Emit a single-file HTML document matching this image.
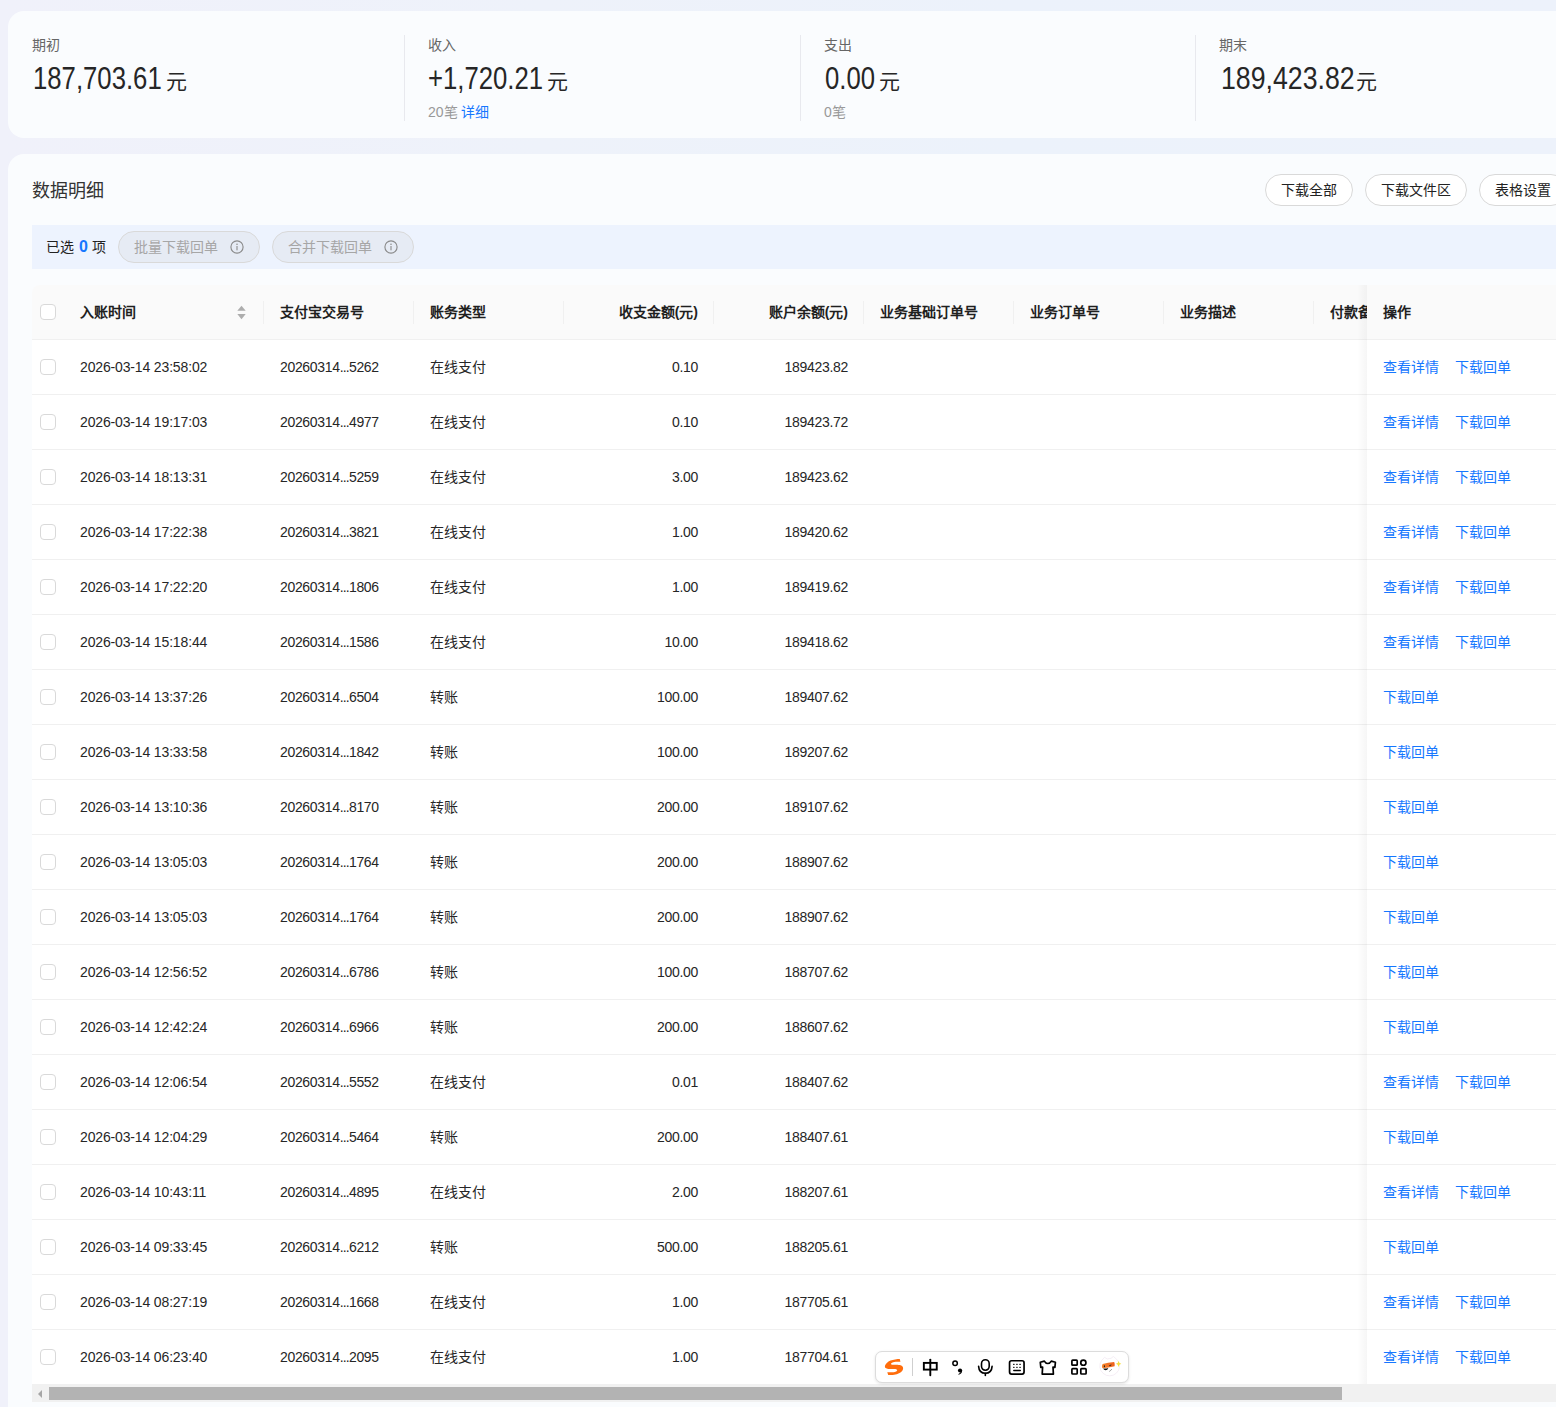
<!DOCTYPE html>
<html lang="zh-CN">
<head>
<meta charset="utf-8">
<title>数据明细</title>
<style>
* { box-sizing: border-box; margin: 0; padding: 0; }
html, body { width: 1556px; height: 1407px; overflow: hidden; background: #eef2fa; }
body { font-family: "Liberation Sans", sans-serif; font-size: 14px; color: #262626; }
.page { position: relative; width: 1556px; height: 1407px; overflow: hidden; background: linear-gradient(90deg, #f0f1fa 0%, #eef2fa 35%, #ecf2fb 65%, #edf2fb 100%); }
a { text-decoration: none; }

.card { position: absolute; left: 8px; width: 1640px; background: #fafcfe; border-radius: 16px; }
.stats { top: 11px; height: 127px; }
.detail { top: 154px; height: 1400px; }

/* stats */
.stat { position: absolute; top: 24px; height: 86px; width: 396px; border-left: 1px solid #e8e9ee; }
.s1 { left: 0; border-left: none; }
.s2 { left: 396px; }
.s3 { left: 792px; }
.s4 { left: 1187px; }
.lab { position: absolute; left: 23px; top: 1px; font-size: 14px; line-height: 18px; color: #666; white-space: nowrap; }
.s1 .lab, .s1 .sub { left: 24px; }
.s1 .val { left: 25px; }
.s3 .val { left: 24px; }
.s4 .val { left: 25px; }
.s4 .num { transform: scaleX(.875); }
.val { position: absolute; left: 23px; top: 23px; height: 40px; line-height: 40px; white-space: nowrap; color: #262626; }
.num { display: inline-block; font-size: 30.5px; transform: scaleX(.843); transform-origin: 0 50%; }
.yuan { position: absolute; top: 4px; font-size: 21px; }
.sub { position: absolute; left: 23px; top: 68px; font-size: 14px; line-height: 18px; color: #999; white-space: nowrap; }
.dt { color: #1677ff; }
.cnt { display: inline-block; min-width: 29px; }
.s3 .cnt { min-width: 0; }
.sel1 { display: inline-block; width: 28px; }

/* detail header */
.title { position: absolute; left: 24px; top: 25px; font-size: 18px; line-height: 24px; color: #333; white-space: nowrap; }
.btns { position: absolute; left: 0; top: 20px; height: 32px; }
.btn { position: absolute; top: 0; height: 32px; line-height: 30px; border: 1px solid #d9d9d9; border-radius: 16px; background: #fff; text-align: center; font-size: 14px; color: #222; white-space: nowrap; overflow: hidden; }
.b1 { left: 1257px; width: 88px; }
.b2 { left: 1357px; width: 102px; }
.b3 { left: 1471px; width: 88px; }

/* selection bar */
.selbar { position: absolute; left: 24px; top: 71px; width: 1600px; height: 44px; background: #edf3fe; }
.seltxt { position: absolute; left: 14px; top: 0; line-height: 44px; font-size: 14px; color: #222; white-space: nowrap; }
.seltxt b { color: #1677ff; font-weight: bold; font-size: 16px; margin: 0 0 0 1px; }
.pill { position: absolute; top: 6px; height: 32px; width: 142px; border: 1px solid #d9d9d9; border-radius: 16px; background: #e6ebf4; color: #a6a6a6; font-size: 14px; line-height: 30px; white-space: nowrap; overflow: hidden; }
.p1 { left: 86px; }
.p2 { left: 240px; }
.pt { position: absolute; left: 15px; top: 0; }
.info { position: absolute; left: 111px; top: 8px; }

/* table */
.table { position: absolute; left: 24px; top: 131px; width: 1600px; }
.thead { position: relative; height: 55px; background: #fafafa; border-bottom: 1px solid #f0f0f0; border-top-left-radius: 8px; }
.tr { position: relative; height: 55px; background: #fff; border-bottom: 1px solid #f0f0f0; }
.th, .td { position: absolute; top: 0; height: 54px; line-height: 54px; white-space: nowrap; overflow: hidden; padding: 0 16px; }
.th { font-weight: bold; color: #1f1f1f; font-size: 14px; }
.td { color: #262626; font-size: 14px; }
.th::after { content: ""; position: absolute; right: 0; top: 16px; width: 1px; height: 23px; background: #f0f0f0; }
.th.c0::after, .th.op::after, .th.c9::after { display: none; }
.c0 { left: 0; width: 32px; padding: 0; }
.c1 { left: 32px; width: 200px; }
.c2 { left: 232px; width: 150px; }
.c3 { left: 382px; width: 150px; }
.c4 { left: 532px; width: 150px; }
.c5 { left: 682px; width: 150px; }
.c6 { left: 832px; width: 150px; }
.c7 { left: 982px; width: 150px; }
.c8 { left: 1132px; width: 150px; }
.c9 { left: 1282px; width: 150px; }
.op { left: 1335px; width: 270px; background: inherit; }
.thead .op { background: #fafafa; }
.tr .op { background: #fff; }
.r { text-align: right; }
.n { letter-spacing: -0.15px; }
.cb { position: absolute; left: 8px; top: 19px; width: 16px; height: 16px; border: 1px solid #d9d9d9; border-radius: 4px; background: #fff; }
.sort { position: absolute; left: 173px; top: 20px; }
.lk { display: inline-block; width: 56px; color: #1677ff; margin-right: 16px; white-space: nowrap; vertical-align: top; }
.fixshadow { position: absolute; left: 1325px; top: 0; width: 10px; height: 1101px; background: linear-gradient(to right, rgba(0,0,0,0), rgba(0,0,0,0.035)); pointer-events: none; }

/* horizontal scrollbar */
.hscroll { position: absolute; left: 24px; top: 1230px; width: 1600px; height: 18px; background: #f1f1f1; }
.arrow { position: absolute; left: 5.8px; top: 5.8px; width: 0; height: 0; border-top: 4px solid transparent; border-bottom: 4px solid transparent; border-right: 4.5px solid #a6a6a6; }
.thumb { position: absolute; left: 17px; top: 3px; width: 1293px; height: 13px; background: #b3b3b3; }

/* IME */
.ime { position: absolute; left: 875px; top: 1351px; width: 254px; height: 32px; background: #fff; border: 1px solid #dcdcdc; border-radius: 7px; box-shadow: 0 1px 3px rgba(0,0,0,0.11); }
.imesvg { position: absolute; left: 875px; top: 1351px; }

.s1 .yuan { left: 133px; }
.s2 .yuan { left: 119px; }
.s3 .yuan { left: 54px; }
.s4 .yuan { left: 135px; }
.c2 .n { letter-spacing: -0.33px; }
.c2 .e { letter-spacing: -0.8px; }
.c4 .n, .c5 .n { letter-spacing: -0.3px; }

</style>
</head>
<body>
<div class="page">

<div class="card stats">
  <div class="stat s1"><div class="lab">期初</div><div class="val"><span class="num">187,703.61</span><span class="yuan">元</span></div></div>
  <div class="stat s2"><div class="lab">收入</div><div class="val"><span class="num">+1,720.21</span><span class="yuan">元</span></div><div class="sub"><span class="cnt">20笔</span> <a class="dt">详细</a></div></div>
  <div class="stat s3"><div class="lab">支出</div><div class="val"><span class="num">0.00</span><span class="yuan">元</span></div><div class="sub"><span class="cnt">0笔</span></div></div>
  <div class="stat s4"><div class="lab">期末</div><div class="val"><span class="num">189,423.82</span><span class="yuan">元</span></div></div>
</div>

<div class="card detail">
  <div class="title">数据明细</div>
  <div class="btns"><span class="btn b1">下载全部</span><span class="btn b2">下载文件区</span><span class="btn b3">表格设置</span></div>

  <div class="selbar">
    <span class="seltxt"><span class="sel1">已选</span> <b>0</b> 项</span>
    <span class="pill p1"><span class="pt">批量下载回单</span><svg class="info" viewBox="0 0 14 14" width="14" height="14"><circle cx="7" cy="7" r="6.1" fill="none" stroke="#8a8a8a" stroke-width="1.15"/><circle cx="7" cy="4.3" r="0.8" fill="#8c8c8c"/><rect x="6.45" y="6" width="1.1" height="4.3" fill="#8c8c8c"/></svg></span>
    <span class="pill p2"><span class="pt">合并下载回单</span><svg class="info" viewBox="0 0 14 14" width="14" height="14"><circle cx="7" cy="7" r="6.1" fill="none" stroke="#8a8a8a" stroke-width="1.15"/><circle cx="7" cy="4.3" r="0.8" fill="#8c8c8c"/><rect x="6.45" y="6" width="1.1" height="4.3" fill="#8c8c8c"/></svg></span>
  </div>

  <div class="table">
    <div class="thead">
      <div class="th c0"><span class="cb"></span></div>
      <div class="th c1">入账时间<svg class="sort" viewBox="0 0 9 15" width="9" height="15"><path d="M4.5 0.7 L8.7 5.8 H0.3 Z" fill="#adadad"/><path d="M4.5 14.2 L8.7 9 H0.3 Z" fill="#adadad"/></svg></div>
      <div class="th c2">支付宝交易号</div>
      <div class="th c3">账务类型</div>
      <div class="th c4 r">收支金额(元)</div>
      <div class="th c5 r">账户余额(元)</div>
      <div class="th c6">业务基础订单号</div>
      <div class="th c7">业务订单号</div>
      <div class="th c8">业务描述</div>
      <div class="th c9">付款备注</div>
      <div class="th op">操作</div>
    </div>
    <div class="tbody">
<div class="tr"><div class="td c0"><span class="cb"></span></div><div class="td c1"><span class="n">2026-03-14 23:58:02</span></div><div class="td c2"><span class="n">20260314<span class="e">...</span>5262</span></div><div class="td c3">在线支付</div><div class="td c4 r"><span class="n">0.10</span></div><div class="td c5 r"><span class="n">189423.82</span></div><div class="td c6"></div><div class="td c7"></div><div class="td c8"></div><div class="td c9"></div><div class="td op"><a class="lk">查看详情</a><a class="lk">下载回单</a></div></div>
<div class="tr"><div class="td c0"><span class="cb"></span></div><div class="td c1"><span class="n">2026-03-14 19:17:03</span></div><div class="td c2"><span class="n">20260314<span class="e">...</span>4977</span></div><div class="td c3">在线支付</div><div class="td c4 r"><span class="n">0.10</span></div><div class="td c5 r"><span class="n">189423.72</span></div><div class="td c6"></div><div class="td c7"></div><div class="td c8"></div><div class="td c9"></div><div class="td op"><a class="lk">查看详情</a><a class="lk">下载回单</a></div></div>
<div class="tr"><div class="td c0"><span class="cb"></span></div><div class="td c1"><span class="n">2026-03-14 18:13:31</span></div><div class="td c2"><span class="n">20260314<span class="e">...</span>5259</span></div><div class="td c3">在线支付</div><div class="td c4 r"><span class="n">3.00</span></div><div class="td c5 r"><span class="n">189423.62</span></div><div class="td c6"></div><div class="td c7"></div><div class="td c8"></div><div class="td c9"></div><div class="td op"><a class="lk">查看详情</a><a class="lk">下载回单</a></div></div>
<div class="tr"><div class="td c0"><span class="cb"></span></div><div class="td c1"><span class="n">2026-03-14 17:22:38</span></div><div class="td c2"><span class="n">20260314<span class="e">...</span>3821</span></div><div class="td c3">在线支付</div><div class="td c4 r"><span class="n">1.00</span></div><div class="td c5 r"><span class="n">189420.62</span></div><div class="td c6"></div><div class="td c7"></div><div class="td c8"></div><div class="td c9"></div><div class="td op"><a class="lk">查看详情</a><a class="lk">下载回单</a></div></div>
<div class="tr"><div class="td c0"><span class="cb"></span></div><div class="td c1"><span class="n">2026-03-14 17:22:20</span></div><div class="td c2"><span class="n">20260314<span class="e">...</span>1806</span></div><div class="td c3">在线支付</div><div class="td c4 r"><span class="n">1.00</span></div><div class="td c5 r"><span class="n">189419.62</span></div><div class="td c6"></div><div class="td c7"></div><div class="td c8"></div><div class="td c9"></div><div class="td op"><a class="lk">查看详情</a><a class="lk">下载回单</a></div></div>
<div class="tr"><div class="td c0"><span class="cb"></span></div><div class="td c1"><span class="n">2026-03-14 15:18:44</span></div><div class="td c2"><span class="n">20260314<span class="e">...</span>1586</span></div><div class="td c3">在线支付</div><div class="td c4 r"><span class="n">10.00</span></div><div class="td c5 r"><span class="n">189418.62</span></div><div class="td c6"></div><div class="td c7"></div><div class="td c8"></div><div class="td c9"></div><div class="td op"><a class="lk">查看详情</a><a class="lk">下载回单</a></div></div>
<div class="tr"><div class="td c0"><span class="cb"></span></div><div class="td c1"><span class="n">2026-03-14 13:37:26</span></div><div class="td c2"><span class="n">20260314<span class="e">...</span>6504</span></div><div class="td c3">转账</div><div class="td c4 r"><span class="n">100.00</span></div><div class="td c5 r"><span class="n">189407.62</span></div><div class="td c6"></div><div class="td c7"></div><div class="td c8"></div><div class="td c9"></div><div class="td op"><a class="lk">下载回单</a></div></div>
<div class="tr"><div class="td c0"><span class="cb"></span></div><div class="td c1"><span class="n">2026-03-14 13:33:58</span></div><div class="td c2"><span class="n">20260314<span class="e">...</span>1842</span></div><div class="td c3">转账</div><div class="td c4 r"><span class="n">100.00</span></div><div class="td c5 r"><span class="n">189207.62</span></div><div class="td c6"></div><div class="td c7"></div><div class="td c8"></div><div class="td c9"></div><div class="td op"><a class="lk">下载回单</a></div></div>
<div class="tr"><div class="td c0"><span class="cb"></span></div><div class="td c1"><span class="n">2026-03-14 13:10:36</span></div><div class="td c2"><span class="n">20260314<span class="e">...</span>8170</span></div><div class="td c3">转账</div><div class="td c4 r"><span class="n">200.00</span></div><div class="td c5 r"><span class="n">189107.62</span></div><div class="td c6"></div><div class="td c7"></div><div class="td c8"></div><div class="td c9"></div><div class="td op"><a class="lk">下载回单</a></div></div>
<div class="tr"><div class="td c0"><span class="cb"></span></div><div class="td c1"><span class="n">2026-03-14 13:05:03</span></div><div class="td c2"><span class="n">20260314<span class="e">...</span>1764</span></div><div class="td c3">转账</div><div class="td c4 r"><span class="n">200.00</span></div><div class="td c5 r"><span class="n">188907.62</span></div><div class="td c6"></div><div class="td c7"></div><div class="td c8"></div><div class="td c9"></div><div class="td op"><a class="lk">下载回单</a></div></div>
<div class="tr"><div class="td c0"><span class="cb"></span></div><div class="td c1"><span class="n">2026-03-14 13:05:03</span></div><div class="td c2"><span class="n">20260314<span class="e">...</span>1764</span></div><div class="td c3">转账</div><div class="td c4 r"><span class="n">200.00</span></div><div class="td c5 r"><span class="n">188907.62</span></div><div class="td c6"></div><div class="td c7"></div><div class="td c8"></div><div class="td c9"></div><div class="td op"><a class="lk">下载回单</a></div></div>
<div class="tr"><div class="td c0"><span class="cb"></span></div><div class="td c1"><span class="n">2026-03-14 12:56:52</span></div><div class="td c2"><span class="n">20260314<span class="e">...</span>6786</span></div><div class="td c3">转账</div><div class="td c4 r"><span class="n">100.00</span></div><div class="td c5 r"><span class="n">188707.62</span></div><div class="td c6"></div><div class="td c7"></div><div class="td c8"></div><div class="td c9"></div><div class="td op"><a class="lk">下载回单</a></div></div>
<div class="tr"><div class="td c0"><span class="cb"></span></div><div class="td c1"><span class="n">2026-03-14 12:42:24</span></div><div class="td c2"><span class="n">20260314<span class="e">...</span>6966</span></div><div class="td c3">转账</div><div class="td c4 r"><span class="n">200.00</span></div><div class="td c5 r"><span class="n">188607.62</span></div><div class="td c6"></div><div class="td c7"></div><div class="td c8"></div><div class="td c9"></div><div class="td op"><a class="lk">下载回单</a></div></div>
<div class="tr"><div class="td c0"><span class="cb"></span></div><div class="td c1"><span class="n">2026-03-14 12:06:54</span></div><div class="td c2"><span class="n">20260314<span class="e">...</span>5552</span></div><div class="td c3">在线支付</div><div class="td c4 r"><span class="n">0.01</span></div><div class="td c5 r"><span class="n">188407.62</span></div><div class="td c6"></div><div class="td c7"></div><div class="td c8"></div><div class="td c9"></div><div class="td op"><a class="lk">查看详情</a><a class="lk">下载回单</a></div></div>
<div class="tr"><div class="td c0"><span class="cb"></span></div><div class="td c1"><span class="n">2026-03-14 12:04:29</span></div><div class="td c2"><span class="n">20260314<span class="e">...</span>5464</span></div><div class="td c3">转账</div><div class="td c4 r"><span class="n">200.00</span></div><div class="td c5 r"><span class="n">188407.61</span></div><div class="td c6"></div><div class="td c7"></div><div class="td c8"></div><div class="td c9"></div><div class="td op"><a class="lk">下载回单</a></div></div>
<div class="tr"><div class="td c0"><span class="cb"></span></div><div class="td c1"><span class="n">2026-03-14 10:43:11</span></div><div class="td c2"><span class="n">20260314<span class="e">...</span>4895</span></div><div class="td c3">在线支付</div><div class="td c4 r"><span class="n">2.00</span></div><div class="td c5 r"><span class="n">188207.61</span></div><div class="td c6"></div><div class="td c7"></div><div class="td c8"></div><div class="td c9"></div><div class="td op"><a class="lk">查看详情</a><a class="lk">下载回单</a></div></div>
<div class="tr"><div class="td c0"><span class="cb"></span></div><div class="td c1"><span class="n">2026-03-14 09:33:45</span></div><div class="td c2"><span class="n">20260314<span class="e">...</span>6212</span></div><div class="td c3">转账</div><div class="td c4 r"><span class="n">500.00</span></div><div class="td c5 r"><span class="n">188205.61</span></div><div class="td c6"></div><div class="td c7"></div><div class="td c8"></div><div class="td c9"></div><div class="td op"><a class="lk">下载回单</a></div></div>
<div class="tr"><div class="td c0"><span class="cb"></span></div><div class="td c1"><span class="n">2026-03-14 08:27:19</span></div><div class="td c2"><span class="n">20260314<span class="e">...</span>1668</span></div><div class="td c3">在线支付</div><div class="td c4 r"><span class="n">1.00</span></div><div class="td c5 r"><span class="n">187705.61</span></div><div class="td c6"></div><div class="td c7"></div><div class="td c8"></div><div class="td c9"></div><div class="td op"><a class="lk">查看详情</a><a class="lk">下载回单</a></div></div>
<div class="tr"><div class="td c0"><span class="cb"></span></div><div class="td c1"><span class="n">2026-03-14 06:23:40</span></div><div class="td c2"><span class="n">20260314<span class="e">...</span>2095</span></div><div class="td c3">在线支付</div><div class="td c4 r"><span class="n">1.00</span></div><div class="td c5 r"><span class="n">187704.61</span></div><div class="td c6"></div><div class="td c7"></div><div class="td c8"></div><div class="td c9"></div><div class="td op"><a class="lk">查看详情</a><a class="lk">下载回单</a></div></div>
    </div>
    <div class="fixshadow"></div>
  </div>

  <div class="hscroll"><span class="arrow"></span><span class="thumb"></span></div>
</div>

<div class="ime"></div>
<svg class="imesvg" width="254" height="32" viewBox="875 1351 254 32">
  <defs>
    <linearGradient id="vis" x1="0" y1="0" x2="1" y2="0"><stop offset="0" stop-color="#f5842a"/><stop offset="1" stop-color="#ef5f1c"/></linearGradient>
  </defs>
  <!-- sogou S -->
  <path d="M899.76 1359.05 C898.99 1359.11 896.68 1359.17 895.14 1359.42 C893.59 1359.67 891.90 1360.00 890.51 1360.58 C889.12 1361.16 887.73 1362.00 886.81 1362.89 C885.88 1363.78 885.15 1365.05 884.96 1365.90 C884.76 1366.75 885.11 1367.48 885.65 1367.98 C886.19 1368.48 887.08 1368.74 888.20 1368.91 C889.31 1369.08 891.05 1368.96 892.36 1369.00 C893.67 1369.04 895.25 1368.96 896.06 1369.14 C896.87 1369.31 897.14 1369.72 897.22 1370.06 C897.30 1370.41 897.10 1370.87 896.53 1371.22 C895.95 1371.57 895.29 1371.99 893.75 1372.15 C892.21 1372.30 888.35 1372.15 887.27 1372.15 L888.20 1375.06 C888.97 1375.04 891.20 1375.14 892.82 1374.92 C894.44 1374.71 896.45 1374.34 897.91 1373.76 C899.38 1373.19 900.75 1372.30 901.62 1371.45 C902.48 1370.60 902.98 1369.52 903.10 1368.67 C903.21 1367.83 902.87 1366.96 902.31 1366.36 C901.75 1365.76 900.96 1365.34 899.76 1365.07 C898.57 1364.80 896.45 1364.81 895.14 1364.74 C893.83 1364.67 892.59 1364.76 891.90 1364.65 C891.20 1364.53 891.01 1364.34 890.97 1364.05 C890.93 1363.75 891.13 1363.24 891.67 1362.89 C892.21 1362.54 892.75 1362.16 894.21 1361.96 C895.68 1361.77 899.42 1361.77 900.46 1361.73 Z" fill="#ff6d0c"/>
  <!-- separator -->
  <rect x="912" y="1358" width="1" height="18" fill="#cfcfcf"/>
  <!-- zhong -->
  <rect x="923.85" y="1362.9" width="12.9" height="6.7" fill="none" stroke="#000" stroke-width="1.9"/>
  <path d="M930.3 1359.6 V1375.2" stroke="#000" stroke-width="1.9" stroke-linecap="round"/>
  <!-- punct -->
  <circle cx="955.1" cy="1363.2" r="2.25" fill="none" stroke="#000" stroke-width="1.5"/>
  <circle cx="960.05" cy="1370.5" r="2.1" fill="#000"/><path d="M962.15 1370.4 C962.35 1372.6 960.8 1374.2 958.3 1374.8 L958.5 1373.9 C959.7 1373.4 960.3 1372.9 960.4 1372.3 Z" fill="#000"/>
  <!-- mic -->
  <rect x="981.5" y="1359.8" width="7.7" height="10.4" rx="3.85" fill="none" stroke="#000" stroke-width="1.6"/>
  <path d="M978.6 1366.4 C978.9 1371 981.6 1373.3 985.35 1373.3 C989.1 1373.3 991.8 1371 992.1 1366.4" fill="none" stroke="#000" stroke-width="1.6" stroke-linecap="round"/>
  <path d="M985.35 1373.3 V1375.5" stroke="#000" stroke-width="1.6" stroke-linecap="round"/>
  <!-- keyboard -->
  <rect x="1009.55" y="1360.75" width="14.5" height="13.3" rx="2" fill="none" stroke="#000" stroke-width="1.7"/>
  <g fill="#000">
    <rect x="1013.1" y="1363.7" width="1.5" height="1.2" rx=".4"/><rect x="1016.2" y="1363.7" width="1.5" height="1.2" rx=".4"/><rect x="1019.3" y="1363.7" width="1.5" height="1.2" rx=".4"/>
    <rect x="1013.1" y="1366.8" width="1.5" height="1.2" rx=".4"/><rect x="1016.2" y="1366.8" width="1.5" height="1.2" rx=".4"/><rect x="1019.3" y="1366.8" width="1.5" height="1.2" rx=".4"/>
    <rect x="1013.1" y="1369.8" width="7.9" height="1.4" rx=".7"/>
  </g>
  <!-- shirt -->
  <path d="M1044.3 1361.1 L1040.3 1362.3 L1040.8 1367.3 L1042.6 1367.1 L1042.2 1374.1 L1053.4 1374.1 L1053 1367.1 L1054.9 1367.3 L1055.4 1362.3 L1051.3 1361.1 C1050.3 1362.8 1049 1363.5 1047.8 1363.5 C1046.6 1363.5 1045.3 1362.8 1044.3 1361.1 Z" fill="none" stroke="#000" stroke-width="1.7" stroke-linejoin="round"/>
  <!-- grid -->
  <rect x="1071.9" y="1360.1" width="5.3" height="5.1" rx=".8" fill="none" stroke="#000" stroke-width="1.7"/>
  <circle cx="1083.35" cy="1362.65" r="2.6" fill="none" stroke="#000" stroke-width="1.7"/>
  <rect x="1071.9" y="1368.7" width="5.3" height="5.3" rx=".8" fill="none" stroke="#000" stroke-width="1.7"/>
  <rect x="1080.8" y="1368.7" width="5.3" height="5.3" rx=".8" fill="none" stroke="#000" stroke-width="1.7"/>
  <!-- avatar -->
  <path d="M1101.5 1360.6 L1104.6 1357.3 L1107.2 1359 Q1109.5 1358.4 1111 1358.4 L1113.4 1356.4 L1117.6 1360.3 A9.8 9.8 0 1 1 1101.5 1360.6 Z" fill="#fff" stroke="#efe3ee" stroke-width=".6"/>
  <path d="M1102.6 1364 Q1108 1362.4 1114.2 1362.1 Q1115.1 1364.3 1114.6 1366.3 Q1108.5 1367.6 1102.3 1368.3 Q1101.3 1366 1102.6 1364 Z" fill="url(#vis)"/>
  <ellipse cx="1104.4" cy="1366.3" rx=".6" ry="1" fill="#1a1a1a"/>
  <path d="M1109.6 1365.6 L1111 1365.1" stroke="#1a1a1a" stroke-width=".9" stroke-linecap="round"/>
  <path d="M1103.1 1368.5 Q1105.7 1368.7 1108.3 1368 Q1107.6 1370.3 1105.6 1370.3 Q1103.8 1370.2 1103.1 1368.5 Z" fill="#151515"/>
  <path d="M1109.6 1371.3 Q1110.8 1370.7 1111.6 1369.4" stroke="#777" stroke-width=".7" fill="none" stroke-linecap="round"/>
  <path d="M1118.6 1360.9 Q1119 1363.3 1121.3 1363.8 Q1119 1364.3 1118.6 1366.9 Q1118.2 1364.3 1115.9 1363.8 Q1118.2 1363.3 1118.6 1360.9 Z" fill="#f6df3f"/>
</svg>


</div>
</body>
</html>
